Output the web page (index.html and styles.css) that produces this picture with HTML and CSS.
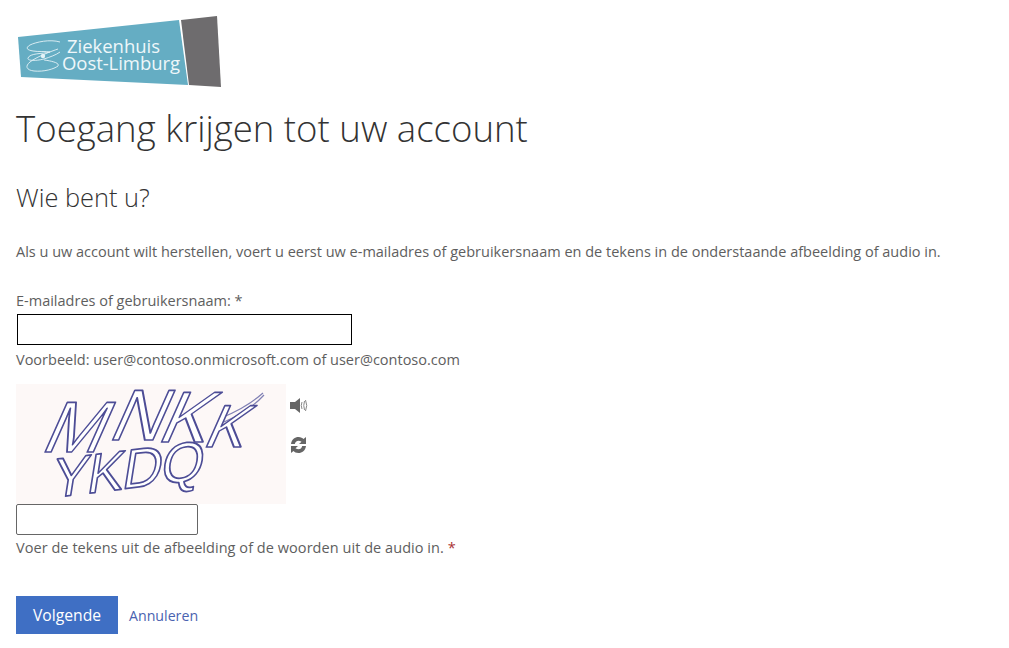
FILE: index.html
```html
<!DOCTYPE html>
<html lang="en">
<head>
    <meta charset="UTF-8">
    <meta name="viewport" content="width=device-width, initial-scale=1.0">
    <title>Toegang krijgen tot uw account</title>
    <link rel="stylesheet" href="styles.css">
</head>
<body>
    <svg class="logo" width="206" height="73" viewBox="17 14 206 73">
        <polygon points="18,36 179,19 188,84 21,76" fill="#65adc3"/>
        <polygon points="181,19 217,15 221,86 189,84" fill="#6e6c6e"/>
        <g fill="none" stroke="#e4f2f6" stroke-width="0.9">
            <path d="M60,41 C50,38 36,41 30,44 C25,47 27,49 33,50 C38,51 46,50 50,51 C42,53 30,52 28,57 C27,60 36,60 44,58 C50,56 56,54 60,51"/>
            <path d="M58,48 C52,50 36,56 30,61 C25,65 26,69 34,70 C44,71 54,68 58,65 C60,62 52,60 44,59"/>
        </g>
        <circle cx="43" cy="55" r="2.2" fill="#e4f2f6"/>
        <text class="logo-text" x="67" y="52" textLength="93">Ziekenhuis</text>
        <text class="logo-text" x="62" y="69" textLength="118">Oost-Limburg</text>
    </svg>

    <h1>Toegang krijgen tot uw account</h1>
    <h2>Wie bent u?</h2>
    <p class="intro">Als u uw account wilt herstellen, voert u eerst uw e-mailadres of gebruikersnaam en de tekens in de onderstaande afbeelding of audio in.</p>

    <form>
        <label for="userId">E-mailadres of gebruikersnaam: <span>*</span></label>
        <input type="text" id="userId" class="user-input">
        <small class="hint">Voorbeeld: user@contoso.onmicrosoft.com of user@contoso.com</small>

        <div class="captcha-row">
            <svg class="captcha" width="270" height="120" viewBox="0 0 270 120">
                <defs>
                    <filter id="soft"><feGaussianBlur stdDeviation="0.35"/></filter>
                </defs>
                <g filter="url(#soft)">
                    <path d="M205,34 C222,27 238,17 247,9 M208,38 C226,30 240,20 248,11" fill="none" stroke="#8080b4" stroke-width="1.2"/>
                    <text class="captcha-text" transform="translate(26,62) skewX(-24)"><tspan x="0" y="6">M</tspan><tspan x="62" y="-6">N</tspan><tspan x="112" y="-4">K</tspan><tspan class="captcha-small" x="160" y="1">K</tspan></text>
                    <text class="captcha-text captcha-second" transform="translate(34,114) rotate(-7) skewX(-16)">YKDQ</text>
                </g>
            </svg>
            <div class="captcha-icons">
                <svg width="18" height="15" viewBox="0 0 18 15">
                    <path d="M0,4 H5 L10,0 V15 L5,11 H0 Z" fill="#666"/>
                    <path d="M12,4 Q10.5,7.5 12,11 M14.5,3 Q13,7.5 14.5,12 M15.5,2 Q18,7.5 15.5,13" fill="none" stroke="#888" stroke-width="1"/>
                </svg>
                <svg width="17" height="18" viewBox="0 0 17 17">
                    <path d="M1,7.5 C1.5,3 5,0.5 8.5,0.5 C11,0.5 12.5,1.5 13.5,2.5 L16,0.5 V7.5 H9 L11.5,5.3 C10.5,4.5 9.5,4.2 8.5,4.2 C6.5,4.2 5.2,5.5 4.8,7.5 Z" fill="#666"/>
                    <path d="M16,9.5 C15.5,14 12,16.5 8.5,16.5 C6,16.5 4.5,15.5 3.5,14.5 L1,16.5 V9.5 H8 L5.5,11.7 C6.5,12.5 7.5,12.8 8.5,12.8 C10.5,12.8 11.8,11.5 12.2,9.5 Z" fill="#666"/>
                </svg>
            </div>
        </div>

        <input type="text" class="captcha-input">
        <small class="hint captcha-hint">Voer de tekens uit de afbeelding of de woorden uit de audio in. <span class="required">*</span></small>

        <div class="actions">
            <button type="submit">Volgende</button>
            <a href="#">Annuleren</a>
        </div>
    </form>
</body>
</html>
```

FILE: styles.css
```css
body
{
    margin: 0;
    padding: 15px 16px 0;
    background-color: white;
    color: #5e5e5e;
    font-family: "Open Sans", "Noto Sans", sans-serif;
    font-size: 14.5px;
    overflow: hidden;
}

.logo
{
    display: block;
    margin-left: 1px;
}

.logo-text
{
    fill: #eef7fa;
    font-size: 18.5px;
}

h1
{
    margin: 16px 0 0;
    color: #333;
    font-size: 36.6px;
    font-weight: 300;
    line-height: 48px;
}

h2
{
    margin: 28px 0 0;
    color: #333;
    font-size: 25.4px;
    font-weight: 300;
    line-height: 34px;
}

.intro
{
    margin: 28px 0 0;
    line-height: 20px;
}

label
{
    display: block;
    margin-top: 29px;
    line-height: 20px;
}

input
{
    display: block;
    box-sizing: border-box;
    background-color: white;
    height: 31px;
}

.user-input
{
    width: 335px;
    margin: 3px 0 0 1px;
    border: 1.5px solid black;
}

.hint
{
    display: block;
    font-size: 14.5px;
    line-height: 20px;
    margin-top: 5px;
}

.captcha-hint
{
    margin-top: 3px;
    letter-spacing: 0.05px;
}

.required
{
    color: #a33;
}

.captcha-row
{
    display: flex;
    margin-top: 14px;
}

.captcha
{
    display: block;
    background-color: #fdf8f7;
    overflow: visible;
}

.captcha-text
{
    font-family: "Liberation Sans", sans-serif;
    font-size: 72px;
    fill: white;
    stroke: #4d4d96;
    stroke-width: 1.7;
    stroke-linejoin: round;
}

.captcha-small
{
    font-size: 60px;
}

.captcha-second
{
    font-size: 55px;
    letter-spacing: -1px;
}

.captcha-icons
{
    display: flex;
    flex-direction: column;
    gap: 23px;
    padding: 14px 0 0 4px;
}

.captcha-input
{
    width: 182px;
    border: 1px solid #666;
    border-radius: 2px;
}

.actions
{
    display: flex;
    align-items: center;
    gap: 11px;
    margin-top: 38px;
}

button
{
    width: 102px;
    height: 38px;
    border: none;
    background-color: #3f6fc4;
    color: white;
    font-family: inherit;
    font-size: 15.7px;
}

a
{
    color: #4a62b0;
    font-size: 14.2px;
    text-decoration: none;
}
```
